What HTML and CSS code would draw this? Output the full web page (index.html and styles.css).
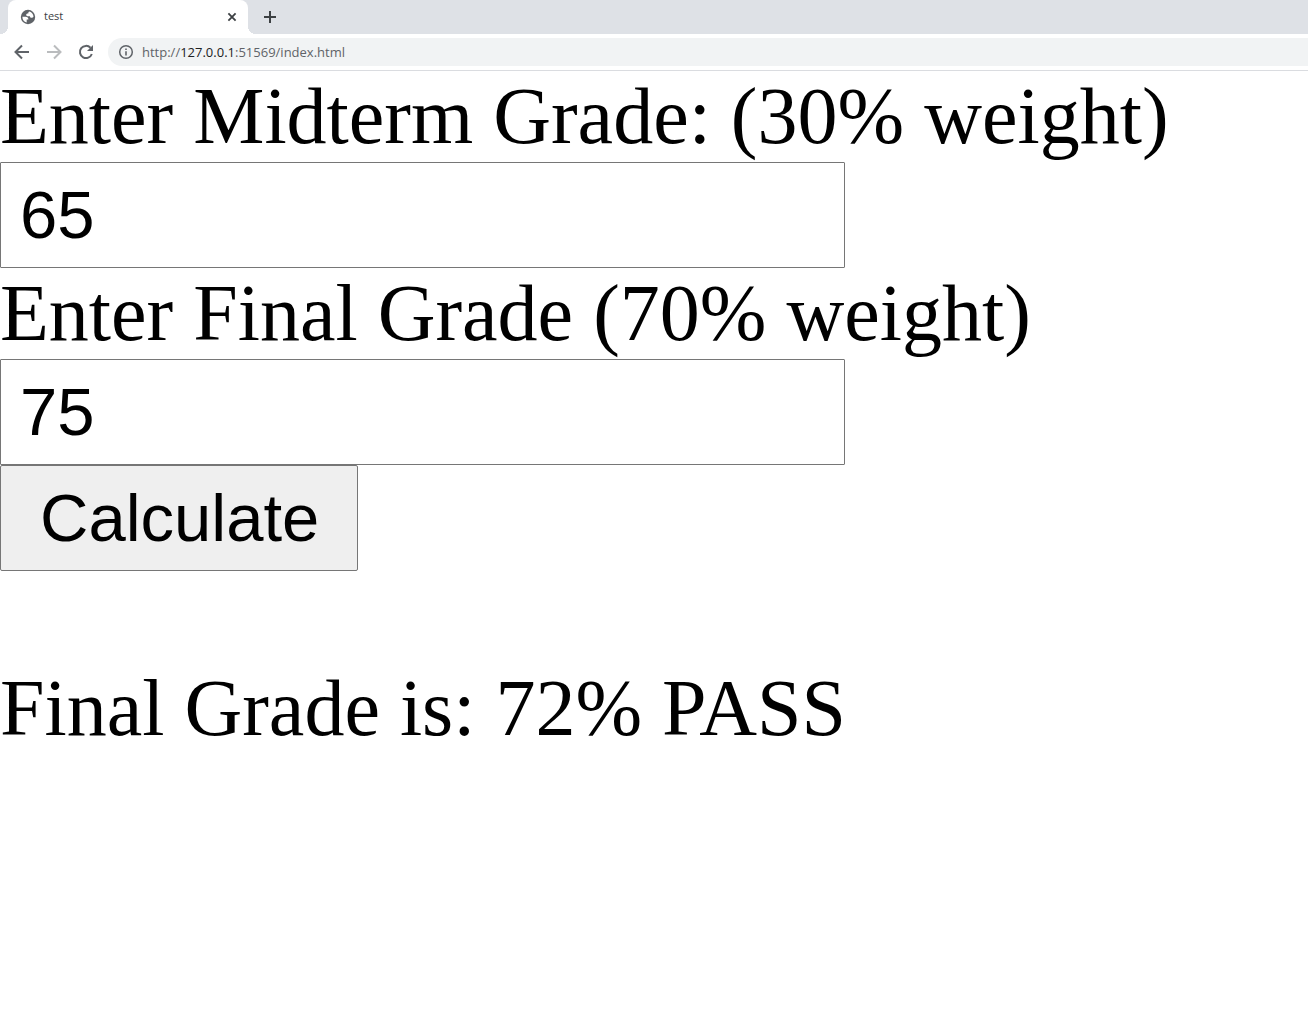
FILE: index.html
```html
<!DOCTYPE html>
<html lang="en">
<head>
<meta charset="utf-8">
<title>test</title>
<link rel="stylesheet" href="styles.css">
</head>
<body>
<header class="browser">
  <div class="tabstrip">
    <div class="tab">
      <svg class="favicon" viewBox="0 0 16 16" aria-hidden="true"><circle cx="8" cy="8" r="7.200" fill="#5f6368"/><path fill="#fff" d="M2.400 7.800h3.200c1.900 0 2.800.9 2.800 2.800H6.700v3C3.900 13 2.300 10.800 2.400 7.800zM9.500 2.600c2.300.7 3.900 2.700 4 5.200-.6 1-1.500 1.300-2.500.9-.8-.3-1-.7-1-1.500H7.500C6.700 7.200 6.200 6.600 6.200 5.800c0-.8.600-1.400 1.500-1.400h.6c0-1 .4-1.600 1.200-1.800z"/></svg>
      <span class="tab-title">test</span>
      <button class="icon-button tab-close" type="button" aria-label="Close tab"><svg width="16" height="16" viewBox="0 0 16 16"><path d="M4.400 4.400l7.200 7.200M11.600 4.400l-7.200 7.200" stroke="#3c4043" stroke-width="1.800" fill="none"/></svg></button>
    </div>
    <button class="icon-button new-tab" type="button" aria-label="New tab"><svg width="16" height="16" viewBox="0 0 16 16"><path d="M8 2v12M2 8h12" stroke="#3c4043" stroke-width="2" fill="none"/></svg></button>
  </div>
  <div class="toolbar">
    <button class="icon-button" type="button" aria-label="Back"><svg width="20" height="20" viewBox="0 0 20 20"><path d="M17 10H4.500M10 3.500L3.500 10l6.500 6.500" stroke="#5f6368" stroke-width="2" fill="none"/></svg></button>
    <button class="icon-button" type="button" aria-label="Forward" disabled><svg width="20" height="20" viewBox="0 0 20 20"><path d="M3 10h12.500M10 3.500l6.500 6.500-6.500 6.500" stroke="#babcbe" stroke-width="2" fill="none"/></svg></button>
    <button class="icon-button" type="button" aria-label="Reload"><svg width="20" height="20" viewBox="0 0 20 20"><path d="M15.800 12A6.100 6.100 0 1 1 14.500 5.800" stroke="#5f6368" stroke-width="2" fill="none"/><path fill="#5f6368" d="M17 3v6h-6z"/></svg></button>
    <div class="address">
      <svg width="16" height="16" viewBox="0 0 16 16" aria-hidden="true"><circle cx="8" cy="8" r="6.300" stroke="#5f6368" stroke-width="1.500" fill="none"/><path fill="#5f6368" d="M7.200 7.200h1.600v4.200H7.200zM7.200 4.500h1.600v1.600H7.200z"/></svg>
      <span class="url">http://<span class="host">127.0.0.1</span>:51569/index.html</span>
    </div>
  </div>
</header>
<main class="page">
  <form id="grades">
    <label for="midterm">Enter Midterm Grade: (30% weight)</label>
    <input id="midterm" type="text" value="65">
    <label for="final">Enter Final Grade (70% weight)</label>
    <input id="final" type="text" value="75">
    <button class="calculate" type="button">Calculate</button>
    <output class="result" for="midterm final">Final Grade is: 72% PASS</output>
  </form>
</main>
</body>
</html>
```

FILE: styles.css
```css
* {
  box-sizing: border-box;
}

body {
  margin: 0;
  background: #fff;
  color: #000;
  font-family: "Liberation Serif", "Times New Roman", serif;
}

.browser {
  font-family: "Open Sans", sans-serif;
  border-bottom: 1px solid #dadce0;
}

.tabstrip {
  display: flex;
  height: 34px;
  padding-left: 8px;
  background: #dee1e6;
}

.tab {
  position: relative;
  display: flex;
  align-items: center;
  gap: 8px;
  width: 240px;
  padding: 0 8px 0 12px;
  border-radius: 8px 8px 0 0;
  background: #fff;
}

/* Flared feet that join the tab to the toolbar */
.tab::before,
.tab::after {
  content: "";
  position: absolute;
  bottom: 0;
  width: 8px;
  height: 8px;
}

.tab::before {
  right: 100%;
  background: radial-gradient(circle at 0 0, #dee1e6 8px, #fff 8px);
}

.tab::after {
  left: 100%;
  background: radial-gradient(circle at 100% 0, #dee1e6 8px, #fff 8px);
}

.favicon {
  width: 16px;
  height: 16px;
}

.tab-title {
  flex: 1;
  font-size: 11px;
  line-height: 16px;
  padding-bottom: 2px;
  color: #3c4043;
}

.icon-button {
  display: flex;
  align-items: center;
  justify-content: center;
  padding: 0;
  border: 0;
  background: none;
}

.new-tab {
  margin-left: 14px;
}

.toolbar {
  display: flex;
  align-items: center;
  gap: 12px;
  height: 36px;
  padding-left: 12px;
}

.address {
  display: flex;
  flex: 1;
  align-items: center;
  gap: 8px;
  height: 28px;
  padding-left: 10px;
  border-radius: 14px 0 0 14px;
  background: #f1f3f4;
}

.url {
  font-size: 13px;
  color: #5f6368;
}

.host {
  color: #202124;
}

#grades {
  display: flex;
  flex-direction: column;
  align-items: flex-start;
  font-size: 80px;
  line-height: 91px;
}

#grades input,
.calculate {
  height: 106px;
  border: 1px solid #767676;
  border-radius: 2px;
  color: #000;
  font-family: "Liberation Sans", Arial, sans-serif;
  font-size: 67px;
}

#grades input {
  width: 845px;
  max-width: 100%;
  padding: 0 19px 2px;
  border-radius: 1px;
  background: #fff;
}

.calculate {
  padding: 0 38px 2px 39px;
  background: #efefef;
}

.result {
  margin-top: 92px;
}
```
